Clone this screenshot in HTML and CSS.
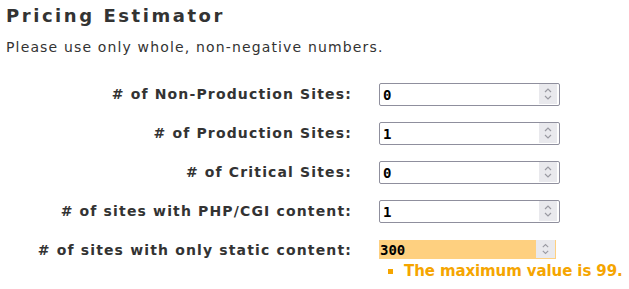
FILE: index.html
```html
<!DOCTYPE html>
<html>
<head>
<meta charset="utf-8">
<link rel="stylesheet" href="styles.css">
</head>
<body>
<h2 class="title">Pricing Estimator</h2>
<p class="note">Please use only whole, non-negative numbers.</p>
<form class="form">
  <div class="row">
    <label class="label">#&nbsp;of Non-Production Sites:</label>
    <div class="field">
      <span class="box">
        <input class="num" type="number" value="0">
        <span class="spin"><svg viewBox="0 0 18 20" width="18" height="20"><path d="M6 8 L9 5 L12 8 M6 12 L9 15 L12 12" fill="none" stroke="#9a9aa2" stroke-width="1.2"/></svg></span>
      </span>
    </div>
  </div>
  <div class="row">
    <label class="label">#&nbsp;of Production Sites:</label>
    <div class="field">
      <span class="box">
        <input class="num" type="number" value="1">
        <span class="spin"><svg viewBox="0 0 18 20" width="18" height="20"><path d="M6 8 L9 5 L12 8 M6 12 L9 15 L12 12" fill="none" stroke="#9a9aa2" stroke-width="1.2"/></svg></span>
      </span>
    </div>
  </div>
  <div class="row">
    <label class="label">#&nbsp;of Critical Sites:</label>
    <div class="field">
      <span class="box">
        <input class="num" type="number" value="0">
        <span class="spin"><svg viewBox="0 0 18 20" width="18" height="20"><path d="M6 8 L9 5 L12 8 M6 12 L9 15 L12 12" fill="none" stroke="#9a9aa2" stroke-width="1.2"/></svg></span>
      </span>
    </div>
  </div>
  <div class="row">
    <label class="label">#&nbsp;of sites with PHP/CGI content:</label>
    <div class="field">
      <span class="box">
        <input class="num" type="number" value="1">
        <span class="spin"><svg viewBox="0 0 18 20" width="18" height="20"><path d="M6 8 L9 5 L12 8 M6 12 L9 15 L12 12" fill="none" stroke="#9a9aa2" stroke-width="1.2"/></svg></span>
      </span>
    </div>
  </div>
  <div class="row">
    <label class="label">#&nbsp;of sites with only static content:</label>
    <div class="field">
      <span class="box box-invalid">
        <input class="num invalid" type="number" value="300">
        <span class="spin spin-invalid"><svg viewBox="0 0 18 20" width="19" height="18"><path d="M6 8 L9 5 L12 8 M6 12 L9 15 L12 12" fill="none" stroke="#9a9aa2" stroke-width="1.2"/></svg></span>
      </span>
      <ul class="errors"><li>The maximum value is 99.</li></ul>
    </div>
  </div>
</form>
</body>
</html>
```
FILE: styles.css
```css
html, body {
  margin: 0;
  padding: 0;
  background: #ffffff;
}
body {
  font-family: "DejaVu Sans", Verdana, sans-serif;
  color: #333333;
  padding: 0 6px;
}
.title {
  margin: 0;
  padding-top: 4px;
  font-size: 18px;
  font-weight: bold;
  letter-spacing: 2.55px;
  line-height: 24px;
  color: #333333;
}
.note {
  margin: 10px 0 0 0;
  font-size: 14px;
  letter-spacing: 1.15px;
  line-height: 18px;
}
.form {
  margin-top: 27px;
}
.row {
  display: flex;
  align-items: flex-start;
  margin-bottom: 16px;
}
.label {
  width: 346px;
  flex: none;
  text-align: right;
  font-size: 14px;
  font-weight: bold;
  letter-spacing: 1.15px;
  line-height: 23px;
  color: #333333;
}
.field {
  margin-left: 27px;
}
.box {
  position: relative;
  display: block;
  width: 181px;
  height: 23px;
}
.box-invalid {
  width: 177px;
  height: 19px;
  margin-top: 1px;
}
.num {
  box-sizing: border-box;
  display: block;
  width: 100%;
  height: 100%;
  margin: 0;
  padding: 0 24px 0 3px;
  font-family: "DejaVu Sans Mono", monospace;
  font-size: 14px;
  font-weight: bold;
  color: #000000;
  border: 1px solid #8f8f9d;
  border-radius: 2px;
  background: #ffffff;
  outline: none;
  -moz-appearance: textfield;
}
.num::-webkit-inner-spin-button,
.num::-webkit-outer-spin-button {
  -webkit-appearance: none;
  margin: 0;
}
.num.invalid {
  border: none;
  border-radius: 0;
  background: #fed080;
  padding-left: 1px;
}
.spin {
  position: absolute;
  right: 3px;
  top: 1px;
  width: 18px;
  height: 20px;
  background: #e9e9ed;
  display: flex;
  align-items: center;
  justify-content: center;
}
.spin-invalid {
  right: 1px;
  top: 0;
  width: 19px;
  height: 18px;
}
.spin svg {
  display: block;
}
.errors {
  margin: 3px 0 0 0;
  padding: 0 0 0 25px;
  list-style: square;
  color: #f5a500;
  font-size: 15px;
  font-weight: bold;
  letter-spacing: -0.1px;
  line-height: 18px;
}
```
